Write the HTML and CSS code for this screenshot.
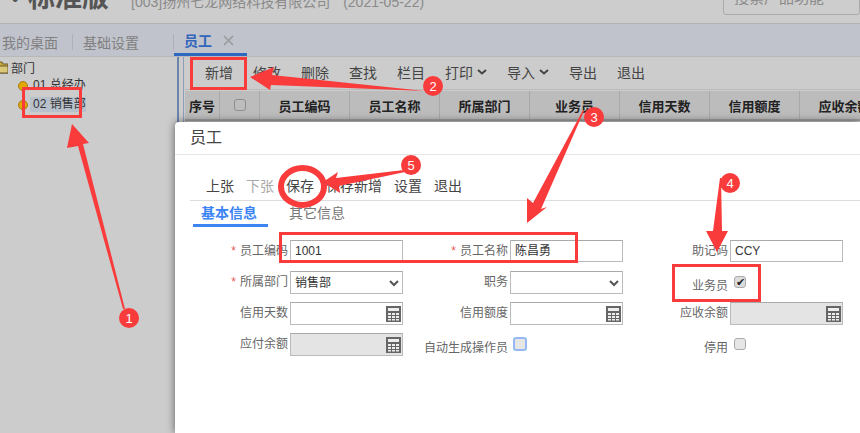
FILE: index.html
```html
<!DOCTYPE html>
<html lang="zh-CN">
<head>
  <meta charset="UTF-8" />
  <title>员工</title>
  <link rel="stylesheet" href="styles.css">
</head>
<body>

<div class="page">
  <div class="header">
    <span class="dot-mark">•</span>
    <span class="brand">标准版</span>
    <span class="company">[003]扬州七龙网络科技有限公司</span>
    <span class="date">(2021-05-22)</span>
    <div class="search">搜索产品功能</div>
  </div>

  <div class="tabs">
    <span class="tab-first">我的桌面</span>
    <span class="tab-sep"></span>
    <span class="tab-plain">基础设置</span>
    <span class="tab-sep"></span>
    <div class="tab-active"><b>员工</b><svg class="tab-x" width="11" height="11" viewBox="0 0 11 11"><path d="M1 1l9 9M10 1l-9 9" fill="none" stroke="#9a9a9a" stroke-width="1.600"/></svg></div>
  </div>

  <div class="content">
    <div class="tree">
      <div class="tree-root">
        <svg class="folder" width="11" height="13" viewBox="0 0 11 13"><path d="M0 1h5l1 2h5v9H0z" fill="#c8a838" stroke="#6a5a30"/><path d="M0 5h11v7H0z" fill="#d8c878" stroke="#6a5a30"/></svg>
        部门
      </div>
      <div class="tree-item"><span class="bullet"></span><span class="tree-name">01 总经办</span></div>
      <div class="tree-item"><span class="bullet"></span><span class="tree-name selected">02 销售部</span></div>
    </div>

    <div class="main">
      <div class="main-inner">
        <div class="toolbar">
          <span>新增</span><span>修改</span><span>删除</span><span>查找</span><span>栏目</span>
          <span>打印<svg class="caret" width="10" height="6" viewBox="0 0 10 6"><path d="M1 1l4 3.500L9 1" fill="none" stroke="#444" stroke-width="2"/></svg></span>
          <span>导入<svg class="caret" width="10" height="6" viewBox="0 0 10 6"><path d="M1 1l4 3.500L9 1" fill="none" stroke="#444" stroke-width="2"/></svg></span>
          <span>导出</span><span>退出</span>
        </div>
        <div class="thead">
          <div class="th th-no">序号</div>
          <div class="th th-check"><span class="check"></span></div>
          <div class="th">员工编码</div>
          <div class="th">员工名称</div>
          <div class="th">所属部门</div>
          <div class="th">业务员</div>
          <div class="th">信用天数</div>
          <div class="th">信用额度</div>
          <div class="th">应收余额</div>
        </div>
      </div>
    </div>
  </div>
</div>

<div class="modal">
  <div class="modal-title">员工</div>
  <div class="modal-tools">
    <span>上张</span><span class="off">下张</span><span>保存</span><span>保存新增</span><span>设置</span><span>退出</span>
  </div>
  <div class="modal-tabs">
    <span class="mtab mtab-on">基本信息</span>
    <span class="mtab">其它信息</span>
  </div>
  <div class="form">
    <label class="lbl"><i>*</i>员工编码</label>
    <div class="field">1001</div>
    <label class="lbl"><i>*</i>员工名称</label>
    <div class="field">陈昌勇</div>
    <label class="lbl">助记码</label>
    <div class="field">CCY</div>

    <label class="lbl"><i>*</i>所属部门</label>
    <div class="field tall">销售部<svg class="chev" width="10" height="7" viewBox="0 0 10 7"><path d="M1 1l4 4 4-4" fill="none" stroke="#555" stroke-width="2"/></svg></div>
    <label class="lbl">职务</label>
    <div class="field tall"><svg class="chev" width="10" height="7" viewBox="0 0 10 7"><path d="M1 1l4 4 4-4" fill="none" stroke="#555" stroke-width="2"/></svg></div>
    <label class="lbl lbl-down">业务员</label>
    <div class="plain"><span class="check checked">✔</span></div>

    <label class="lbl">信用天数</label>
    <div class="field tall"><svg class="calc" width="15" height="16" viewBox="0 0 15 16"><use href="#calc"/></svg></div>
    <label class="lbl">信用额度</label>
    <div class="field tall"><svg class="calc" width="15" height="16" viewBox="0 0 15 16"><use href="#calc"/></svg></div>
    <label class="lbl">应收余额</label>
    <div class="field tall locked"><svg class="calc" width="15" height="16" viewBox="0 0 15 16"><use href="#calc"/></svg></div>

    <label class="lbl">应付余额</label>
    <div class="field tall locked"><svg class="calc" width="15" height="16" viewBox="0 0 15 16"><use href="#calc"/></svg></div>
    <label class="lbl lbl-down">自动生成操作员</label>
    <div class="plain"><span class="check focus"></span></div>
    <label class="lbl lbl-down">停用</label>
    <div class="plain"><span class="check"></span></div>
  </div>
</div>

<svg class="marks" width="860" height="433" viewBox="0 0 860 433">
  <defs>
    <g id="calc">
      <rect width="15" height="16" fill="#666"/>
      <rect x="2" y="2" width="11" height="3" fill="#eee"/>
      <path d="M2 7h3v2H2zM6 7h3v2H6zM10 7h3v2h-3zM2 10h3v2H2zM6 10h3v2H6zM10 10h3v2h-3zM2 13h3v1.500H2zM6 13h3v1.500H6zM10 13h3v1.500h-3z" fill="#eee"/>
    </g>
  </defs>
  <rect class="box" x="191.500" y="58.500" width="54" height="30"/>
  <rect class="box" x="23.500" y="88.500" width="57" height="28"/>
  <rect class="box" x="280.500" y="233.500" width="296" height="28"/>
  <rect class="box" x="673.500" y="265.500" width="86" height="35"/>
  <ellipse class="ring" cx="302.500" cy="186.500" rx="21.500" ry="18.500"/>

  <polygon class="arrow" points="72,124 89,143 83,144 125,309 123,309 78,146 67,148"/>
  <polygon class="arrow" points="250,77 274,67 272,75 425,91 271,85 270,90"/>
  <polygon class="arrow" points="527,223 527,198 533,203 583,110 584,111 541,209 547,207"/>
  <polygon class="arrow" points="717,252 706,231 713,231 720,178 721,178 722,231 728,231"/>
  <polygon class="arrow" points="323,182 338,172 336,178 404,170 405,172 339,186 340,193"/>

  <circle class="num" cx="129" cy="318" r="10"/><text class="num-text" x="129" y="322.500">1</text>
  <circle class="num" cx="433" cy="86" r="10"/><text class="num-text" x="433" y="90.500">2</text>
  <circle class="num" cx="594" cy="117" r="10"/><text class="num-text" x="594" y="121.500">3</text>
  <circle class="num" cx="730" cy="183" r="10"/><text class="num-text" x="730" y="187.500">4</text>
  <circle class="num" cx="411" cy="165" r="10"/><text class="num-text" x="411" y="169.500">5</text>
</svg>

</body>
</html>
```

FILE: styles.css
```css
html, body {
  margin: 0;
  height: 100%;
  overflow: hidden;
}
body {
  position: relative;
  font-family: "Liberation Sans", "Noto Sans CJK SC", sans-serif;
  background: #cccccc;
  color: #444;
}

.page {
  display: flex;
  flex-direction: column;
  height: 433px;
}

/* top bar, cut off by the window */
.header {
  flex: none;
  height: 24px;
  box-sizing: border-box;
  display: flex;
  align-items: flex-end;
  overflow: hidden;
  background: #cdcdcd;
  border-bottom: 1px solid #b3b3b3;
  padding-bottom: 11px;
  white-space: nowrap;
}
.dot-mark {
  margin: 0 0 2px 12px;
  width: 16px;
  font-size: 18px;
  line-height: 20px;
  color: #555;
}
.brand {
  font-size: 27px;
  line-height: 30px;
  font-weight: bold;
  color: #555;
  width: 103px;
  margin-bottom: -1px;
}
.company, .date {
  font-size: 14px;
  line-height: 20px;
  color: #8a8a8a;
}
.date {
  margin-left: 13px;
}
.search {
  margin: 0 0 -3px auto;
  width: 137px;
  height: 24px;
  box-sizing: border-box;
  display: flex;
  align-items: flex-end;
  padding: 0 0 6px 10px;
  font-size: 15px;
  line-height: 20px;
  color: #8a8a8a;
  border: 1px solid #aaa;
  border-radius: 3px;
}

.tabs {
  flex: none;
  height: 33px;
  box-sizing: border-box;
  display: flex;
  align-items: center;
  padding-top: 3px;
  background: #c0c3cc;
  border-bottom: 1px solid #b8b8b8;
  font-size: 14px;
  color: #808080;
}
.tab-first {
  margin-left: 2px;
  width: 70px;
}
.tab-sep {
  width: 1px;
  height: 16px;
  background: #aeb0b8;
}
.tab-plain {
  margin-left: 10px;
  width: 90px;
}
.tab-active {
  width: 73px;
  height: 32px;
  margin-top: -3px;
  box-sizing: border-box;
  display: flex;
  align-items: center;
  padding: 3px 0 0 10px;
  border-bottom: 3px solid #2e68c0;
  color: #3366bb;
}
.tab-x {
  margin-left: 11px;
}

.content {
  flex: 1;
  display: flex;
}

.tree {
  width: 177px;
  flex: none;
  font-size: 12px;
  color: #333;
}
.tree-root {
  height: 18px;
  margin-top: 1px;
  display: flex;
  align-items: center;
  gap: 3px;
  margin-left: -3px;
}
.tree-item {
  height: 19px;
  display: flex;
  align-items: center;
  padding-left: 18px;
}
.bullet {
  width: 8px;
  height: 8px;
  border-radius: 50%;
  background: #e0a800;
  border: 0.5px solid #a87a10;
  margin-right: 2px;
}
.tree-name {
  padding-left: 3px;
  line-height: 15px;
}
.tree-name.selected {
  background: #b8c0cc;
}

.main {
  flex: 1;
  min-width: 0;
  overflow: hidden;
  border-left: 2px solid #6c84ac;
  padding-left: 4px;
}
.main-inner {
  height: 65px;
  border-left: 1px solid #8c9ebc;
  padding-left: 1px;
}
.toolbar {
  height: 33px;
  box-sizing: border-box;
  display: flex;
  align-items: center;
  gap: 20px;
  padding: 0 0 3px 20px;
  font-size: 14px;
  color: #444;
  border-bottom: 1px solid #bbb;
  white-space: nowrap;
}
.caret {
  margin: 0 0 3px 4px;
}
.thead {
  display: flex;
  width: 800px;
  height: 30px;
  margin-top: 1px;
  background: #bcbcbc;
  border-bottom: 2px solid #a0a0a0;
  box-sizing: border-box;
}
.th {
  flex: none;
  width: 90px;
  box-sizing: border-box;
  border-right: 1px solid #a8a8a8;
  display: flex;
  align-items: center;
  justify-content: center;
  font-size: 13px;
  font-weight: bold;
  color: #222;
  white-space: nowrap;
}
.th-no {
  width: 35px;
}
.th-check {
  width: 40px;
}

.check {
  display: block;
  width: 12px;
  height: 12px;
  box-sizing: border-box;
  border: 1px solid #aaa;
  border-radius: 3px;
  background: #e6e6e6;
  text-align: center;
}
.th-check .check {
  background: #bdbdbd;
  border-color: #8e8e8e;
}
.check.checked {
  background: #dcdcdc;
  font-size: 11px;
  line-height: 10px;
  color: #222;
}
.check.focus {
  width: 14px;
  height: 14px;
  border: 2px solid #93b8f0;
  margin: -1px 0 0 -1px;
}

/* employee dialog over the dimmed page */
.modal {
  position: absolute;
  left: 175px;
  top: 122px;
  right: 0;
  bottom: 0;
  background: #fff;
  border-top-left-radius: 4px;
  box-shadow: 0 0 9px rgba(0, 0, 0, 0.55);
}
.modal-title {
  height: 33px;
  box-sizing: border-box;
  border-bottom: 1px solid #e5e5e5;
  padding: 4px 0 0 15px;
  font-size: 16px;
  line-height: 24px;
  color: #444;
}
.modal-tools {
  height: 46px;
  box-sizing: border-box;
  margin-left: 15px;
  padding: 0 0 4px 16px;
  display: flex;
  align-items: flex-end;
  gap: 12px;
  font-size: 14px;
  line-height: 20px;
  color: #444;
  border-bottom: 1px solid #ddd;
}
.modal-tools .off {
  color: #aaa;
}
.modal-tabs {
  margin-left: 18px;
  height: 26px;
  display: flex;
}
.mtab {
  box-sizing: border-box;
  height: 26px;
  padding: 2px 8px 0;
  margin-right: 13px;
  font-size: 14px;
  line-height: 20px;
  color: #777;
}
.mtab-on {
  width: 75px;
  color: #3d84f5;
  font-weight: bold;
  border-bottom: 3px solid #3d84f5;
}

.form {
  margin-top: 13px;
  display: grid;
  grid-template-columns: 115px 113px 107px 113px 107px 113px;
  grid-auto-rows: 23px;
  row-gap: 8px;
  font-size: 12px;
}
.lbl {
  text-align: right;
  padding-right: 2px;
  line-height: 23px;
  color: #666;
  white-space: nowrap;
}
.lbl i {
  font-style: normal;
  color: #e85a5a;
  margin-right: 4px;
}
.lbl-down {
  line-height: 31px;
}
.field {
  box-sizing: border-box;
  height: 22px;
  border: 1px solid #bbb;
  border-top-color: #aaa;
  padding: 0 4px;
  display: flex;
  align-items: center;
  line-height: 20px;
  color: #333;
}
.field.tall {
  height: 23px;
}
.field.locked {
  background: #e4e4e4;
}
.chev {
  margin: 1px -1px 0 auto;
}
.calc {
  margin: 0 -3px 0 auto;
}
.plain {
  display: flex;
  padding: 5px 0 0 4px;
}

/* red notes drawn over the screenshot */
.marks {
  position: absolute;
  left: 0;
  top: 0;
  pointer-events: none;
}
.box {
  fill: none;
  stroke: #f93b3b;
  stroke-width: 3;
}
.ring {
  fill: none;
  stroke: #f93b3b;
  stroke-width: 6;
}
.arrow, .num {
  fill: #f93b3b;
}
.num-text {
  fill: #fff;
  font-size: 13px;
  text-anchor: middle;
}
```
